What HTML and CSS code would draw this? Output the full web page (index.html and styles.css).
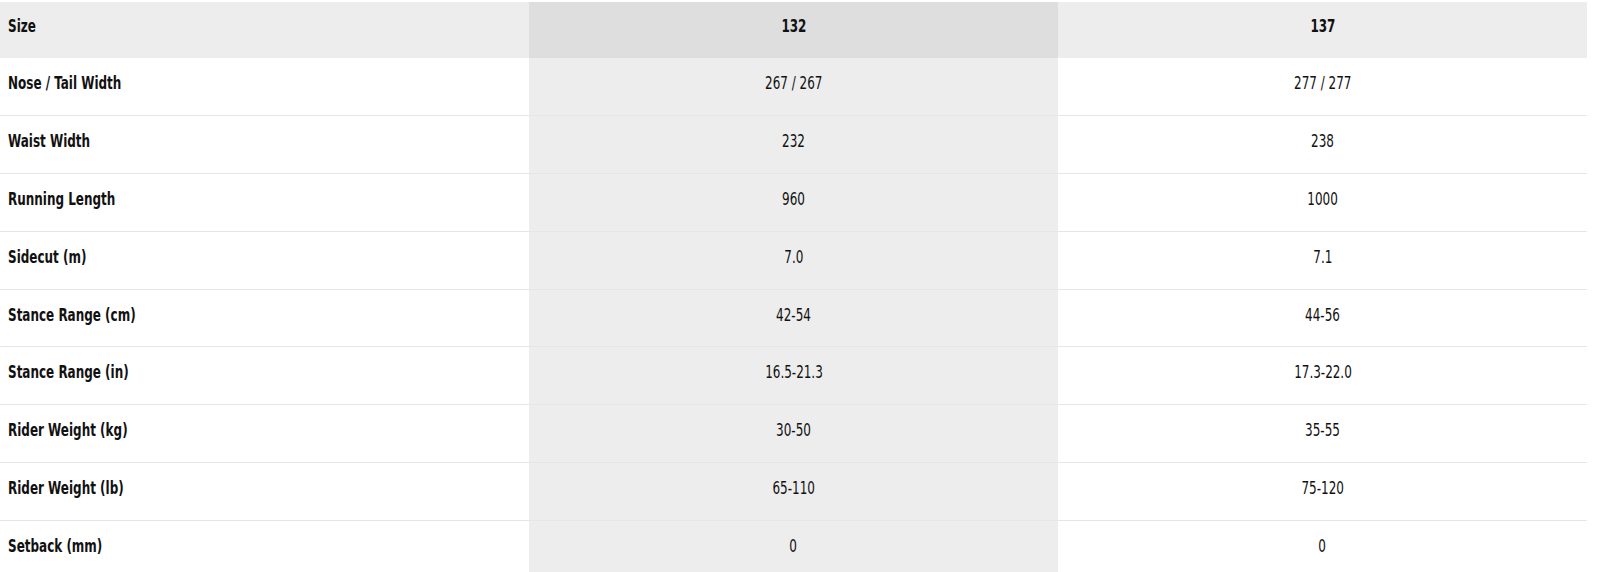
FILE: index.html
```html
<!DOCTYPE html>
<html>
<head>
<meta charset="utf-8">
<link rel="stylesheet" href="styles.css">
</head>
<body>
<table class="specs">
  <colgroup>
    <col class="col-label">
    <col class="col-hl">
    <col class="col-plain">
  </colgroup>
  <thead>
    <tr class="head-row">
      <th class="label"><span class="t">Size</span></th>
      <th class="val hl"><span class="t">132</span></th>
      <th class="val"><span class="t">137</span></th>
    </tr>
  </thead>
  <tbody>
    <tr><th class="label"><span class="t">Nose / Tail Width</span></th><td class="val hl"><span class="t">267 / 267</span></td><td class="val"><span class="t">277 / 277</span></td></tr>
    <tr><th class="label"><span class="t">Waist Width</span></th><td class="val hl"><span class="t">232</span></td><td class="val"><span class="t">238</span></td></tr>
    <tr><th class="label"><span class="t">Running Length</span></th><td class="val hl"><span class="t">960</span></td><td class="val"><span class="t">1000</span></td></tr>
    <tr><th class="label"><span class="t">Sidecut (m)</span></th><td class="val hl"><span class="t">7.0</span></td><td class="val"><span class="t">7.1</span></td></tr>
    <tr><th class="label"><span class="t">Stance Range (cm)</span></th><td class="val hl"><span class="t">42-54</span></td><td class="val"><span class="t">44-56</span></td></tr>
    <tr><th class="label"><span class="t">Stance Range (in)</span></th><td class="val hl"><span class="t">16.5-21.3</span></td><td class="val"><span class="t">17.3-22.0</span></td></tr>
    <tr><th class="label"><span class="t">Rider Weight (kg)</span></th><td class="val hl"><span class="t">30-50</span></td><td class="val"><span class="t">35-55</span></td></tr>
    <tr><th class="label"><span class="t">Rider Weight (lb)</span></th><td class="val hl"><span class="t">65-110</span></td><td class="val"><span class="t">75-120</span></td></tr>
    <tr class="last"><th class="label"><span class="t">Setback (mm)</span></th><td class="val hl"><span class="t">0</span></td><td class="val"><span class="t">0</span></td></tr>
  </tbody>
</table>
</body>
</html>
```
FILE: styles.css
```css
html, body {
  margin: 0;
  padding: 0;
  background: #ffffff;
}

body {
  padding-top: 2px;
  font-family: "DejaVu Sans Condensed", "DejaVu Sans", sans-serif;
  font-stretch: condensed;
  color: #111111;
}

.specs {
  width: 1587px;
  border-collapse: collapse;
  table-layout: fixed;
}

.col-label, .col-hl, .col-plain {
  width: 529px;
}

.specs th, .specs td {
  padding: 0;
  font-size: 18px;
  line-height: 20px;
  vertical-align: top;
}

.t {
  display: inline-block;
  white-space: nowrap;
  transform: scaleX(0.74);
}

.label .t {
  transform-origin: left center;
}

.val .t {
  transform-origin: center center;
}

.specs tbody tr {
  height: 57.8px;
  border-bottom: 1px solid #e6e6e6;
}

.specs tbody tr.last {
  border-bottom: none;
}

.specs tbody th, .specs tbody td {
  padding-top: 15px;
}

.head-row {
  height: 56px;
  background: #ededed;
}

.head-row th {
  padding-top: 14px;
}

.label {
  text-align: left;
  padding-left: 8px !important;
  font-weight: 700;
}

.val {
  text-align: center;
  font-weight: 400;
}

.head-row .val {
  font-weight: 700;
}

.hl {
  background: #ededed;
}

.head-row .hl {
  background: #dedede;
}
```
